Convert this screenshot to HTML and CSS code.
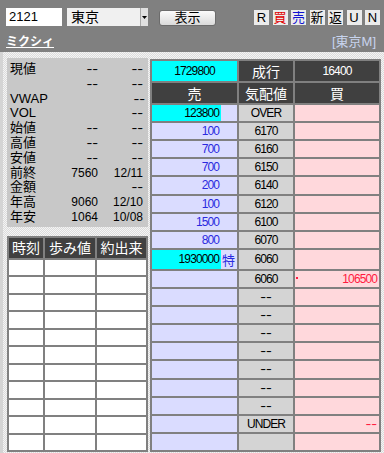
FILE: index.html
```html
<!DOCTYPE html>
<html lang="ja">
<head>
    <meta charset="UTF-8">
    <title>板情報</title>
    <link rel="stylesheet" href="styles.css">
</head>
<body>
    <div class="topbar">
        <div class="controls">
            <div class="code-box">2121</div>
            <div class="market-select">
                <span class="label">東京</span>
                <span class="arrow"><svg width="5" height="3" viewBox="0 0 5 3"><path d="M0 0H5L2.5 3Z" fill="#000"/></svg></span>
            </div>
            <div class="show-btn">表示</div>
            <div class="mini-btns">
                <span>R</span><span class="buy">買</span><span class="sell">売</span><span>新</span><span>返</span><span>U</span><span>N</span>
            </div>
        </div>
        <div class="name-row">
            <a class="stock-name">ミクシィ</a>
            <span class="market-tag">[東京M]</span>
        </div>
    </div>

    <div class="main">
        <div class="left-col">
            <div class="quote">
                <div class="quote-row"><span>現値</span><span><i class="dash">--</i></span><span><i class="dash">--</i></span></div>
                <div class="quote-row"><span></span><span><i class="dash">--</i></span><span><i class="dash">--</i></span></div>
                <div class="quote-row"><span>VWAP</span><span></span><span><i class="dash">--</i></span></div>
                <div class="quote-row"><span>VOL</span><span></span><span><i class="dash">--</i></span></div>
                <div class="quote-row"><span>始値</span><span><i class="dash">--</i></span><span><i class="dash">--</i></span></div>
                <div class="quote-row"><span>高値</span><span><i class="dash">--</i></span><span><i class="dash">--</i></span></div>
                <div class="quote-row"><span>安値</span><span><i class="dash">--</i></span><span><i class="dash">--</i></span></div>
                <div class="quote-row"><span>前終</span><span>7560</span><span>12/11</span></div>
                <div class="quote-row"><span>金額</span><span></span><span><i class="dash">--</i></span></div>
                <div class="quote-row"><span>年高</span><span>9060</span><span>12/10</span></div>
                <div class="quote-row"><span>年安</span><span>1064</span><span>10/08</span></div>
            </div>

            <div class="trades">
                <div class="th">時刻</div><div class="th">歩み値</div><div class="th">約出来</div>
                <div></div><div></div><div></div>
                <div></div><div></div><div></div>
                <div></div><div></div><div></div>
                <div></div><div></div><div></div>
                <div></div><div></div><div></div>
                <div></div><div></div><div></div>
                <div></div><div></div><div></div>
                <div></div><div></div><div></div>
                <div></div><div></div><div></div>
                <div></div><div></div><div></div>
                <div></div><div></div><div></div>
            </div>
        </div>

        <div class="board">
            <div class="c hl">1729800</div>
            <div class="c hd">成行</div>
            <div class="c hd num">16400</div>

            <div class="c hd">売</div>
            <div class="c hd">気配値</div>
            <div class="c hd">買</div>

            <div class="c sell"><span class="qty hl">123800</span></div>
            <div class="c price">OVER</div>
            <div class="c buy"></div>

            <div class="c sell"><span class="qty">100</span></div>
            <div class="c price">6170</div>
            <div class="c buy"></div>

            <div class="c sell"><span class="qty">700</span></div>
            <div class="c price">6160</div>
            <div class="c buy"></div>

            <div class="c sell"><span class="qty">700</span></div>
            <div class="c price">6150</div>
            <div class="c buy"></div>

            <div class="c sell"><span class="qty">200</span></div>
            <div class="c price">6140</div>
            <div class="c buy"></div>

            <div class="c sell"><span class="qty">100</span></div>
            <div class="c price">6120</div>
            <div class="c buy"></div>

            <div class="c sell"><span class="qty">1500</span></div>
            <div class="c price">6100</div>
            <div class="c buy"></div>

            <div class="c sell"><span class="qty">800</span></div>
            <div class="c price">6070</div>
            <div class="c buy"></div>

            <div class="c sell"><span class="qty hl">1930000</span><span class="special">特</span></div>
            <div class="c price">6060</div>
            <div class="c buy"></div>

            <div class="c sell"></div>
            <div class="c price">6060</div>
            <div class="c buy marked">106500</div>

            <div class="c sell"></div><div class="c price"><i class="dash">--</i></div><div class="c buy"></div>
            <div class="c sell"></div><div class="c price"><i class="dash">--</i></div><div class="c buy"></div>
            <div class="c sell"></div><div class="c price"><i class="dash">--</i></div><div class="c buy"></div>
            <div class="c sell"></div><div class="c price"><i class="dash">--</i></div><div class="c buy"></div>
            <div class="c sell"></div><div class="c price"><i class="dash">--</i></div><div class="c buy"></div>
            <div class="c sell"></div><div class="c price"><i class="dash">--</i></div><div class="c buy"></div>
            <div class="c sell"></div><div class="c price"><i class="dash">--</i></div><div class="c buy"></div>

            <div class="c sell"></div>
            <div class="c price">UNDER</div>
            <div class="c buy right"><i class="dash">--</i></div>

            <div class="c sell"></div>
            <div class="c price"></div>
            <div class="c buy"></div>
        </div>
    </div>
</body>
</html>
```

FILE: styles.css
```css
body {
    margin: 0;
    width: 384px;
    height: 453px;
    overflow: hidden;
    font-family: "Liberation Sans", "Noto Sans CJK JP", sans-serif;
    font-size: 12px;
    color: #000;
    background: repeating-conic-gradient(#dcdcdc 0 25%, #f4f4f4 0 50%) 0 0 / 2px 2px;
}
.topbar {
    height: 52px;
    background-color: #808080;
    padding: 8px 4px 0 6px;
    box-sizing: border-box;
}
.controls {
    display: flex;
    align-items: flex-start;
    height: 18px;
}
.code-box {
    width: 56px;
    height: 18px;
    background-color: #fff;
    box-sizing: border-box;
    padding: 0 3px;
    font-size: 13px;
    line-height: 18px;
}
.market-select {
    margin-left: 5px;
    width: 81px;
    height: 18px;
    background-color: #f0f0f0;
    display: flex;
}
.market-select .label {
    flex: 1;
    padding-left: 4px;
    font-size: 14px;
    line-height: 18px;
}
.market-select .arrow {
    width: 7px;
    background-color: #e0e0e0;
    border-left: 1px solid #a8a8a8;
    display: flex;
    align-items: center;
    justify-content: center;
}
.show-btn {
    margin-left: 11px;
    margin-top: 2px;
    width: 57px;
    height: 16px;
    border: 1px solid #6c6c6c;
    border-radius: 3px;
    background: linear-gradient(#fbfbfb, #dadada);
    box-sizing: border-box;
    text-align: center;
    line-height: 14px;
    font-size: 13px;
}
.mini-btns {
    margin-left: auto;
    margin-top: 2px;
    display: flex;
    gap: 3.5px;
}
.mini-btns span {
    width: 15px;
    height: 15px;
    background-color: #ebebeb;
    text-align: center;
    line-height: 15px;
    font-size: 13px;
}
.mini-btns .buy {
    color: #e00000;
}
.mini-btns .sell {
    color: #1010d0;
}
.name-row {
    display: flex;
    justify-content: space-between;
    align-items: center;
    margin-top: 5px;
    padding-right: 4px;
}
.stock-name {
    color: #fff;
    font-weight: bold;
    text-decoration: underline;
    font-size: 12px;
}
.market-tag {
    color: #c8d4ee;
    font-size: 13px;
}
.dash {
    display: inline-block;
    font-style: normal;
    font-size: 12px;
    letter-spacing: 0;
    transform: scaleX(1.45);
}
.main {
    display: flex;
    gap: 2px;
    height: 401px;
    padding: 6px 3px 0 4px;
    border-left: 3px solid #d4d4d4;
    box-sizing: border-box;
}
.left-col {
    width: 141px;
    display: flex;
    flex-direction: column;
}
.quote {
    height: 169px;
    background-color: #c8c8c8;
    padding: 4px 5px 0 3px;
    box-sizing: border-box;
    font-size: 13px;
}
.quote-row {
    display: grid;
    grid-template-columns: 1fr 52px 45px;
    height: 14.8px;
    line-height: 14.8px;
}
.quote-row span:nth-child(n+2) {
    text-align: right;
    font-size: 12px;
}
.quote-row .dash {
    transform-origin: right center;
}
.trades {
    margin-top: 9px;
    height: 216px;
    display: grid;
    grid-template-columns: 34px 50px 49px;
    grid-template-rows: 20px repeat(11, 1fr);
    gap: 2px;
    padding: 2px;
    background-color: #808080;
    box-sizing: border-box;
}
.trades div {
    background-color: #fff;
}
.trades .th {
    background-color: #404040;
    color: #fff;
    font-size: 14px;
    text-align: center;
    line-height: 20px;
}
.board {
    width: 231px;
    height: 393px;
    margin-top: 1px;
    display: grid;
    grid-template-columns: 85px 54px 84px;
    grid-template-rows: repeat(21, 1fr);
    gap: 2px;
    padding: 2px;
    background-color: #808080;
    box-sizing: border-box;
}
.c {
    display: flex;
    align-items: center;
    justify-content: center;
    font-size: 12px;
    letter-spacing: -0.9px;
}
.hd {
    background-color: #404040;
    color: #fff;
    font-size: 14px;
    letter-spacing: 0;
}
.hd.num {
    font-size: 12px;
    letter-spacing: -0.9px;
}
.hl {
    background-color: #00ffff;
}
.sell {
    background-color: #dadcff;
    justify-content: flex-start;
    color: #2a2ae0;
}
.price {
    background-color: #d4d4d4;
}
.buy {
    background-color: #ffd8dc;
    color: #ff1a40;
}
.qty {
    width: 69px;
    height: 100%;
    box-sizing: border-box;
    padding-right: 2px;
    display: flex;
    align-items: center;
    justify-content: flex-end;
}
.qty.hl {
    color: #000;
}
.special {
    font-size: 13px;
    letter-spacing: 0;
    padding-left: 1px;
}
.buy.marked {
    justify-content: space-between;
    padding: 0 2px 0 1px;
}
.buy.marked::before {
    content: "";
    width: 2px;
    height: 2px;
    background-color: #ff1a40;
    margin-top: -2px;
}
.buy.right {
    justify-content: flex-end;
    padding-right: 2px;
}
.buy.right .dash {
    transform-origin: right center;
}
```
